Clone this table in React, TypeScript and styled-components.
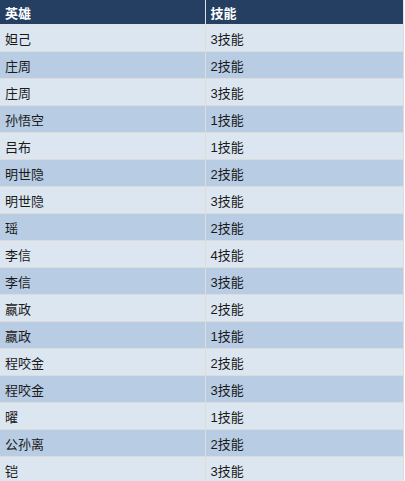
import styled, { createGlobalStyle } from 'styled-components';

const GlobalStyle = createGlobalStyle`
  body {
    margin: 0;
    background: #ffffff;
    font-family: 'Liberation Sans', 'Noto Sans CJK SC', sans-serif;
  }
`;

const Table = styled.table`
  width: 404px;
  border-collapse: collapse;
  table-layout: fixed;
  font-size: 13px;
`;

const HeadCell = styled.th`
  height: 24px;
  padding: 0 5px;
  background-color: #243f62;
  color: #ffffff;
  font-weight: bold;
  text-align: left;
  border: 1px solid #dfe3e8;
  border-top: none;
  border-left: none;
`;

const Row = styled.tr<{ $odd: boolean }>`
  background-color: ${(props) => (props.$odd ? '#b8cce4' : '#dce6f1')};
`;

const Cell = styled.td`
  height: 26px;
  padding: 0 5px;
  color: #1a1a1a;
  border: 1px solid #dcdcdc;
  border-left: none;
`;

const rows: [string, string][] = [
  ['妲己', '3技能'],
  ['庄周', '2技能'],
  ['庄周', '3技能'],
  ['孙悟空', '1技能'],
  ['吕布', '1技能'],
  ['明世隐', '2技能'],
  ['明世隐', '3技能'],
  ['瑶', '2技能'],
  ['李信', '4技能'],
  ['李信', '3技能'],
  ['嬴政', '2技能'],
  ['嬴政', '1技能'],
  ['程咬金', '2技能'],
  ['程咬金', '3技能'],
  ['曜', '1技能'],
  ['公孙离', '2技能'],
  ['铠', '3技能'],
];

export default function App(): JSX.Element {
  return (
    <>
      <GlobalStyle />
      <Table>
        <colgroup>
          <col style={{ width: 205 }} />
          <col />
        </colgroup>
        <thead>
          <tr>
            <HeadCell>英雄</HeadCell>
            <HeadCell>技能</HeadCell>
          </tr>
        </thead>
        <tbody>
          {rows.map(([hero, skill], i) => (
            <Row key={i} $odd={i % 2 === 1}>
              <Cell>{hero}</Cell>
              <Cell>{skill}</Cell>
            </Row>
          ))}
        </tbody>
      </Table>
    </>
  );
}
